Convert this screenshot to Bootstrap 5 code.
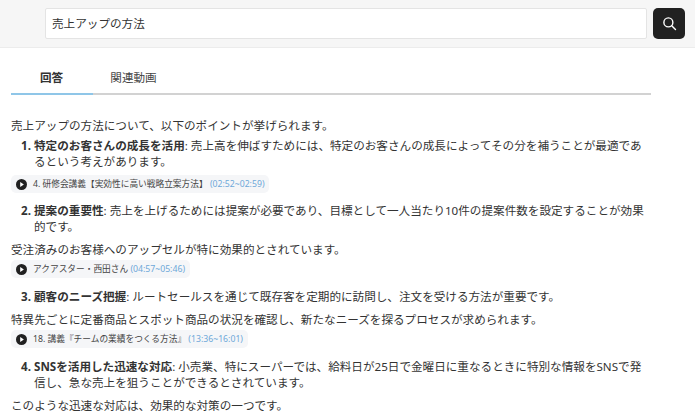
<!DOCTYPE html>
<html lang="ja"><head><meta charset="utf-8">
<link href="https://cdn.jsdelivr.net/npm/bootstrap@5.3.0/dist/css/bootstrap.min.css" rel="stylesheet">
<style>
html,body{height:415px;overflow:hidden}
body{font-family:"Noto Sans","Noto Sans CJK JP",sans-serif;font-size:11.6px;color:#212529;background:#fff;line-height:16px}
.topbar{height:48px;background:#f6f6f6;border-bottom:1px solid #ececec;padding:8px 10px 0 45px;gap:6px}
.qbox{height:31px;flex:1;border:1px solid #e4e4e4;border-radius:2px;background:#fff;font-size:11.6px;padding:0 6px;color:#333}
.qbtn{width:32px;height:31px;background:#212121;border-radius:5px;border:0}
.tabbar{margin:14px 44px 0 11px;height:33px;border-bottom:2px solid #d2d2d2}
.tabitem{width:82px;height:33px;text-align:center;line-height:31px;color:#444;margin-bottom:-2px;padding-right:1px}
.tabitem.on{font-weight:700;color:#333;border-bottom:2px solid #8fc6e8}
.answer{padding:23px 44px 0 11px}
.answer p{margin:0 0 4px;color:#333}
.answer ol{margin:0 0 7px;padding-left:23px;color:#333}
.answer ol li::marker{font-weight:700}
.chip{display:inline-flex;align-items:center;height:18px;background:#f5f6f8;border-radius:5px;padding:0 5px;font-size:8.7px;color:#444;gap:6px;white-space:nowrap}
.chip em{font-style:normal;color:#6ea8d8}
.chiprow{margin:0 0 10px;height:18px;display:flex;align-items:center}
ol + .chiprow{margin-top:-2px}
p + .chiprow{margin-top:-2px;margin-bottom:11px}
</style></head><body>
<div class="topbar d-flex align-items-start">
 <div class="qbox d-flex align-items-center">売上アップの方法</div>
 <button class="qbtn d-flex align-items-center justify-content-center p-0" aria-label="検索"><svg width="15" height="15" viewBox="0 0 16 16" fill="none" stroke="#fff" stroke-width="1.5"><circle cx="6.8" cy="6.8" r="4.8"/><path d="M10.4 10.4l4 4" stroke-linecap="round"/></svg></button>
</div>
<div class="tabbar d-flex">
 <div class="tabitem on">回答</div>
 <div class="tabitem">関連動画</div>
</div>
<div class="answer">
<p>売上アップの方法について、以下のポイントが挙げられます。</p>
<ol start="1"><li><b>特定のお客さんの成長を活用</b>: 売上高を伸ばすためには、特定のお客さんの成長によってその分を補うことが最適であるという考えがあります。</li></ol>
<div class="chiprow"><span class="chip"><svg width="11" height="11" viewBox="0 0 12 12"><circle cx="6" cy="6" r="6" fill="#212121"/><path d="M4.6 3.4L8.6 6L4.6 8.6Z" fill="#fff"/></svg><span>4. 研修会講義【実効性に高い戦略立案方法】 <em>(02:52~02:59)</em></span></span></div>
<ol start="2"><li><b>提案の重要性</b>: 売上を上げるためには提案が必要であり、目標として一人当たり10件の提案件数を設定することが効果的です。</li></ol>
<p>受注済みのお客様へのアップセルが特に効果的とされています。</p>
<div class="chiprow"><span class="chip"><svg width="11" height="11" viewBox="0 0 12 12"><circle cx="6" cy="6" r="6" fill="#212121"/><path d="M4.6 3.4L8.6 6L4.6 8.6Z" fill="#fff"/></svg><span>アクアスター・西田さん <em>(04:57~05:46)</em></span></span></div>
<ol start="3"><li><b>顧客のニーズ把握</b>: ルートセールスを通じて既存客を定期的に訪問し、注文を受ける方法が重要です。</li></ol>
<p>特異先ごとに定番商品とスポット商品の状況を確認し、新たなニーズを探るプロセスが求められます。</p>
<div class="chiprow"><span class="chip"><svg width="11" height="11" viewBox="0 0 12 12"><circle cx="6" cy="6" r="6" fill="#212121"/><path d="M4.6 3.4L8.6 6L4.6 8.6Z" fill="#fff"/></svg><span>18. 講義『チームの業績をつくる方法』 <em>(13:36~16:01)</em></span></span></div>
<ol start="4"><li><b>SNSを活用した迅速な対応</b>: 小売業、特にスーパーでは、給料日が25日で金曜日に重なるときに特別な情報をSNSで発信し、急な売上を狙うことができるとされています。</li></ol>
<p>このような迅速な対応は、効果的な対策の一つです。</p>
</div>
<script src="https://cdn.jsdelivr.net/npm/bootstrap@5.3.0/dist/js/bootstrap.bundle.min.js"></script>
</body></html>
